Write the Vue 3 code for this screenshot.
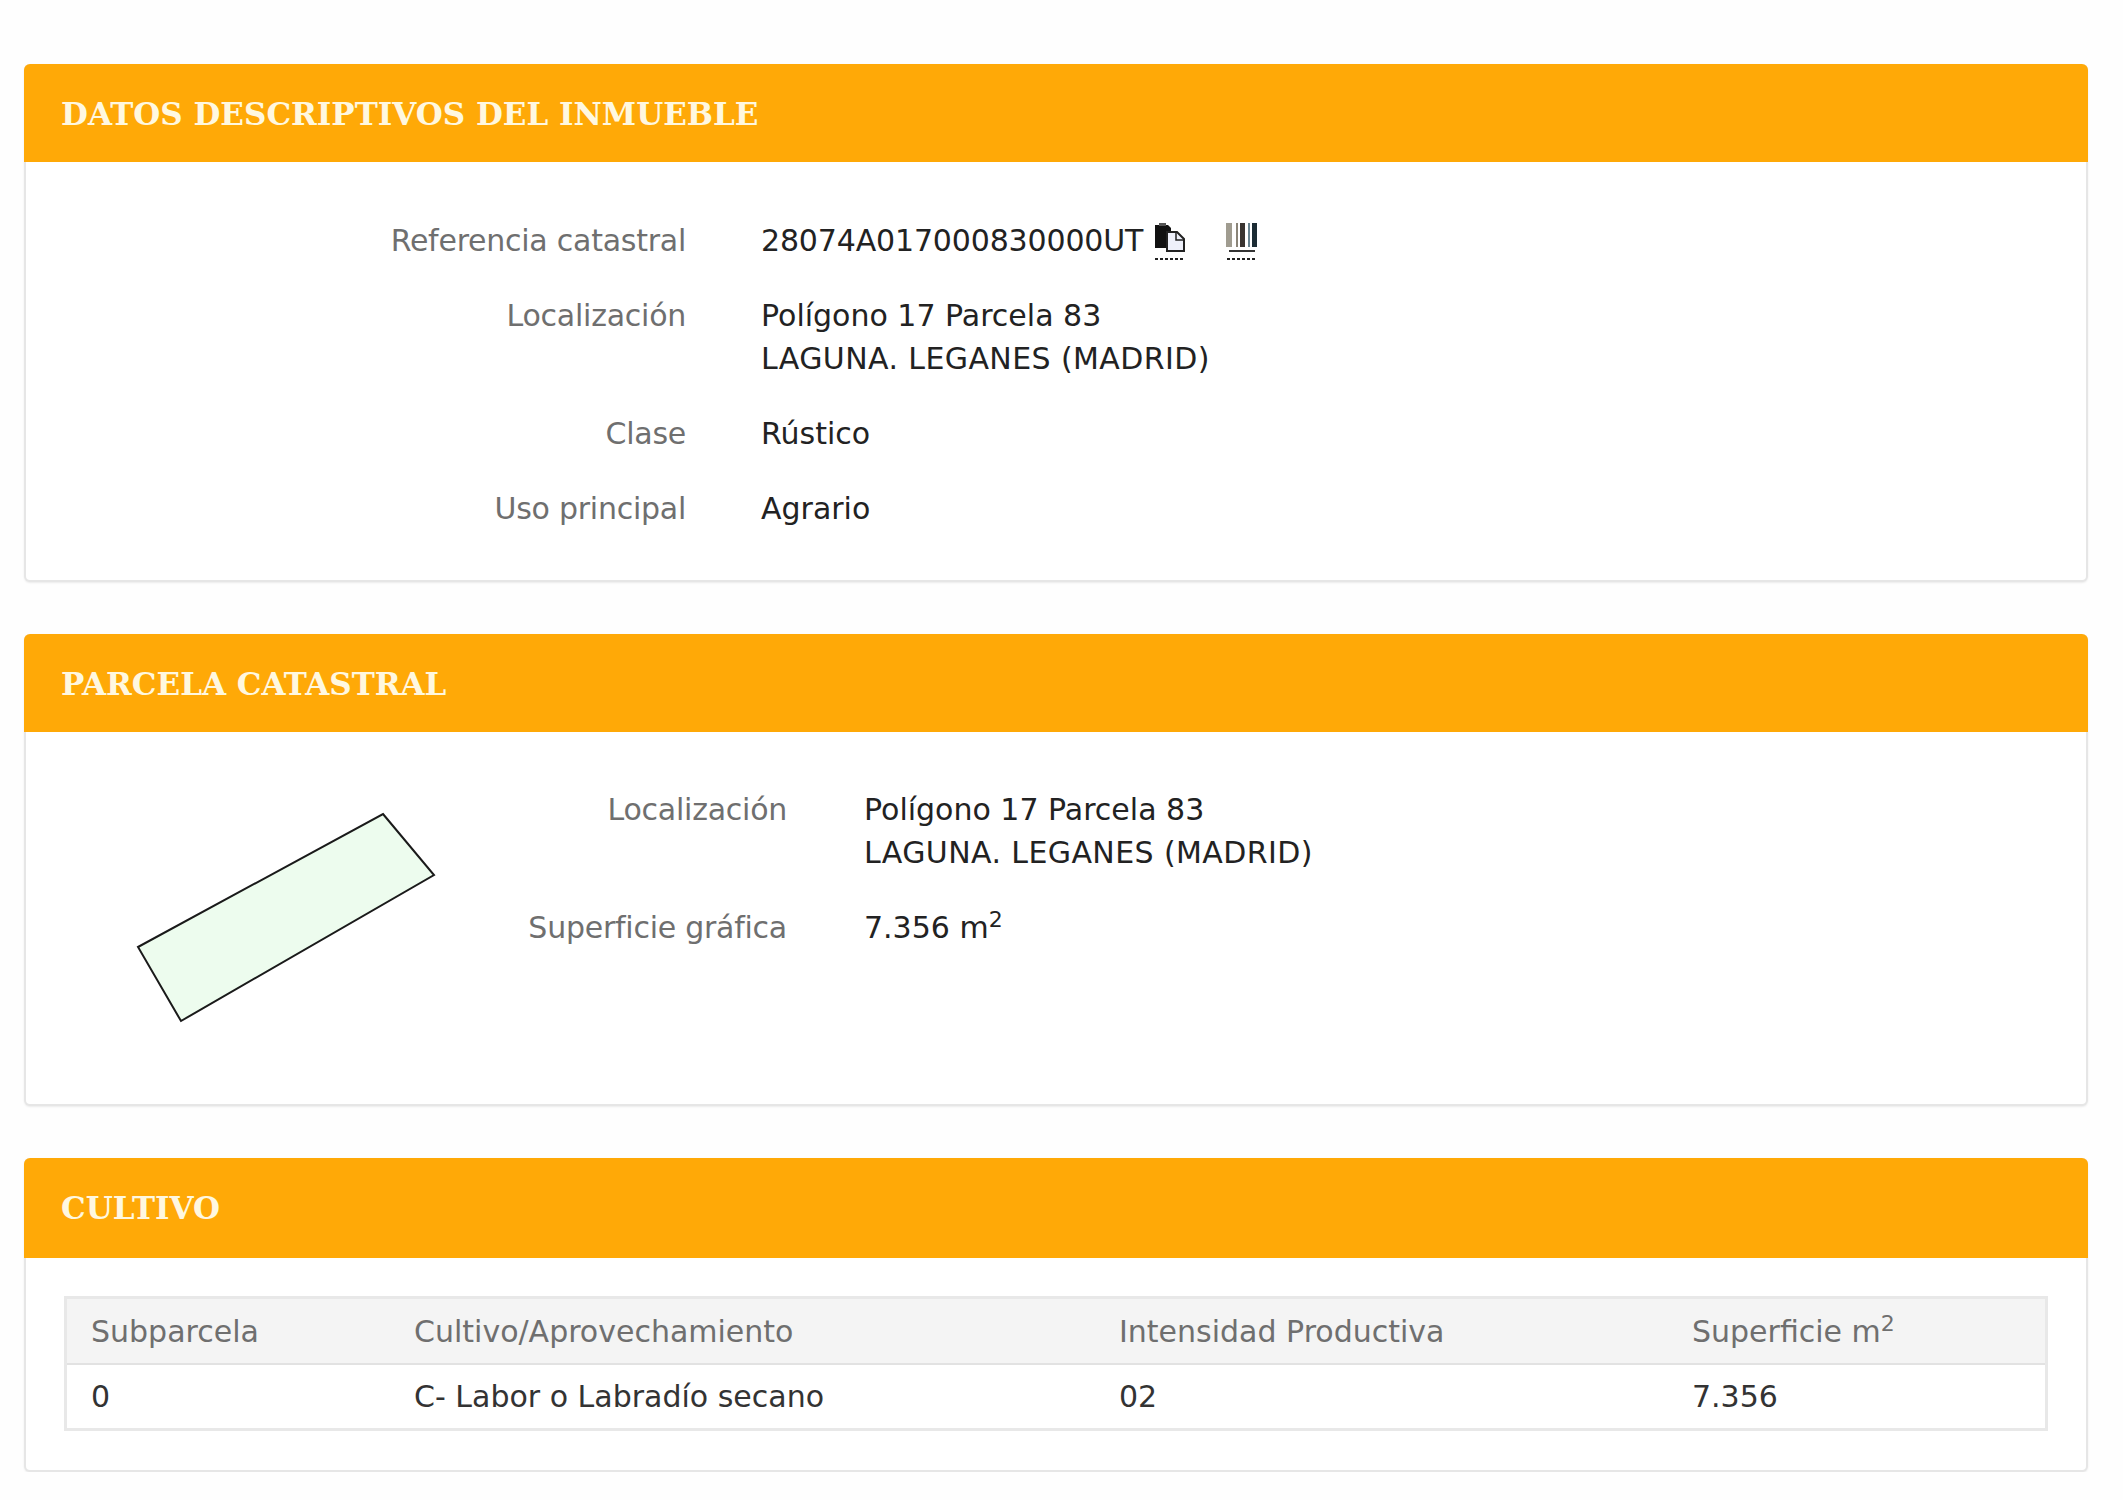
<script setup>
const cultivo = [
  { sub: '0', nombre: 'C- Labor o Labradío secano', intensidad: '02', superficie: '7.356' }
]
</script>

<template>
  <div class="page">
    <section class="card">
      <h2 class="card-title">DATOS DESCRIPTIVOS DEL INMUEBLE</h2>
      <div class="datos">
        <div class="label">Referencia catastral</div>
        <div class="value ref-line">
          <span class="ref-num">28074A017000830000UT</span>
          <svg class="icon-copy" width="32" height="38" viewBox="0 0 32 38">
            <path d="M1 2h13l3 3v20H1z" fill="#111" />
            <rect x="5" y="0" width="7" height="3" fill="#555" />
            <path d="M13 9h10l7 7v12H13z" fill="#eef0fa" stroke="#222" stroke-width="2" />
            <path d="M22 9v8h8" fill="none" stroke="#222" stroke-width="1.5" />
            <line x1="1" y1="36" x2="30" y2="36" stroke="#222" stroke-width="2" stroke-dasharray="3 2" />
          </svg>
          <svg class="icon-bar" width="34" height="38" viewBox="0 0 34 38">
            <rect x="1" y="0" width="6" height="24" fill="#a09c90" />
            <rect x="11" y="0" width="2" height="24" fill="#8a8478" />
            <rect x="15" y="0" width="5" height="24" fill="#3a3430" />
            <rect x="23" y="0" width="2" height="24" fill="#6a8490" />
            <rect x="27" y="0" width="5" height="24" fill="#1c2c34" />
            <line x1="4" y1="28" x2="30" y2="28" stroke="#333" stroke-width="2" />
            <line x1="2" y1="36" x2="32" y2="36" stroke="#222" stroke-width="2" stroke-dasharray="3 2" />
          </svg>
        </div>
        <div class="label">Localización</div>
        <div class="value">Polígono 17 Parcela 83<br /><span class="upper">LAGUNA. LEGANES (MADRID)</span></div>
        <div class="label">Clase</div>
        <div class="value">Rústico</div>
        <div class="label">Uso principal</div>
        <div class="value">Agrario</div>
      </div>
    </section>

    <section class="card">
      <h2 class="card-title">PARCELA CATASTRAL</h2>
      <div class="parcela">
        <svg class="plano" width="320" height="230" viewBox="0 0 320 230">
          <polygon points="249,3 300,64 47,210 4,136" fill="#edfcee" stroke="#1a1a1a" stroke-width="2" />
        </svg>
        <div class="datos datos-parcela">
          <div class="label">Localización</div>
          <div class="value">Polígono 17 Parcela 83<br /><span class="upper">LAGUNA. LEGANES (MADRID)</span></div>
          <div class="label">Superficie gráfica</div>
          <div class="value">7.356 m<sup>2</sup></div>
        </div>
      </div>
    </section>

    <section class="card">
      <h2 class="card-title cultivo-title">CULTIVO</h2>
      <div class="tabla-wrap">
        <table class="tabla">
          <thead>
            <tr>
              <th class="col-sub">Subparcela</th>
              <th class="col-nombre">Cultivo/Aprovechamiento</th>
              <th class="col-int">Intensidad Productiva</th>
              <th>Superficie m<sup>2</sup></th>
            </tr>
          </thead>
          <tbody>
            <tr v-for="fila in cultivo" :key="fila.sub">
              <td>{{ fila.sub }}</td>
              <td>{{ fila.nombre }}</td>
              <td>{{ fila.intensidad }}</td>
              <td>{{ fila.superficie }}</td>
            </tr>
          </tbody>
        </table>
      </div>
    </section>
  </div>
</template>

<style>
html, body {
  background: #fefefe;
}
</style>

<style scoped>
.page {
  display: flex;
  flex-direction: column;
  gap: 52px;
  padding: 64px 35px 0 24px;
  font-family: "DejaVu Sans", Verdana, sans-serif;
  font-size: 30px;
}

.card {
  border: 2px solid #e6e6e6;
  border-top: none;
  border-radius: 6px;
  background: #fff;
  box-shadow: 0 1px 2px rgba(0, 0, 0, 0.08);
}

.card-title {
  margin: 0 -2px;
  height: 98px;
  padding-left: 37px;
  background: #ffa907;
  border-radius: 6px 6px 0 0;
  color: #fff8e0;
  font-family: "DejaVu Serif", serif;
  font-size: 31px;
  font-weight: 700;
  line-height: 100px;
}

.cultivo-title {
  height: 100px;
  line-height: 100px;
}

.datos {
  display: grid;
  grid-template-columns: 660px 1fr;
  column-gap: 75px;
  row-gap: 32px;
  padding: 57px 0 50px;
  line-height: 43px;
}

.label {
  text-align: right;
  color: #6f6f6f;
  letter-spacing: -0.25px;
}

.value {
  color: #222;
}

.upper {
  letter-spacing: 0.4px;
}

.ref-line {
  display: flex;
  align-items: center;
}

.ref-num {
  letter-spacing: -0.15px;
}

.icon-copy {
  margin: 3px 0 0 11px;
}

.icon-bar {
  margin: 3px 0 0 39px;
}

sup {
  font-size: 22px;
  line-height: 0;
}

.parcela {
  display: flex;
  height: 372px;
  padding: 0 0 0 108px;
}

.plano {
  flex: none;
  margin-top: 79px;
}

.datos-parcela {
  flex: 1;
  grid-template-columns: 333px 1fr;
  column-gap: 77px;
  align-content: start;
  padding: 56px 0 0;
}

.tabla-wrap {
  padding: 38px 38px 39px;
}

.tabla {
  width: 100%;
  border: 3px solid #e8e8e8;
  border-collapse: collapse;
  table-layout: fixed;
}

.tabla th,
.tabla td {
  padding: 0 0 0 24px;
  text-align: left;
  font-weight: 400;
}

.tabla th {
  height: 64px;
  background: #f4f4f4;
  border-bottom: 2px solid #e2e2e2;
  color: #6f6f6f;
}

.tabla td {
  height: 63px;
  color: #333;
}

.col-sub {
  width: 299px;
}

.col-nombre {
  width: 681px;
}

.col-int {
  width: 549px;
}
</style>
